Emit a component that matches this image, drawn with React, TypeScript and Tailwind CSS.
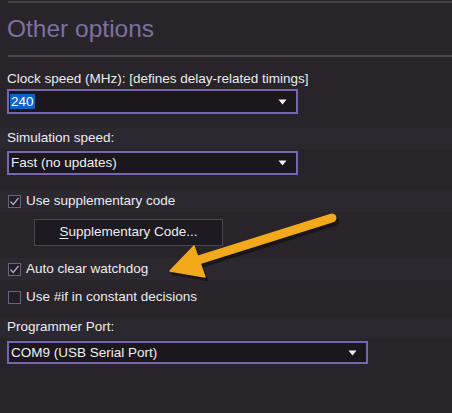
import React from 'react';

const font = { fontFamily: '"Liberation Sans", Arial, sans-serif' };

function Caret() {
  return (
    <svg width="9" height="6" viewBox="0 0 9 6" className="shrink-0">
      <path d="M0.5 0.5 L8.5 0.5 L4.5 5.5 Z" fill="#f2f2f2" />
    </svg>
  );
}

function Select({ value, width, height, highlight }: { value: string; width: string; height: string; highlight?: boolean }) {
  return (
    <div className={`${width} ${height} ml-[7px] border-2 border-[#7467ad] bg-[#1b171d] flex items-center pl-[1px] pr-[9px]`}>
      <span className={`flex-1 text-[13.5px] leading-[18px] text-[#f0f0f0] ${highlight ? '' : 'pl-[1px]'}`}>
        {highlight ? <span className="bg-[#0b63c5] px-[1px] text-white">{value}</span> : value}
      </span>
      <Caret />
    </div>
  );
}

function Check({ label, checked, band }: { label: string; checked?: boolean; band?: boolean }) {
  return (
    <div className={`h-[22px] flex items-center pl-[8px] gap-[5px] ${band ? 'bg-[#2c2830]' : ''}`}>
      <div className="w-[13px] h-[13px] border border-[#6d6380] bg-[#241f27] flex items-center justify-center">
        {checked && (
          <svg width="11" height="11" viewBox="0 0 11 11">
            <path d="M1.5 5.5 L4.2 8.5 L9.5 2" fill="none" stroke="#b7aecb" strokeWidth="1.2" />
          </svg>
        )}
      </div>
      <span className="text-[13.5px] text-[#ececec]">{label}</span>
    </div>
  );
}

export default function App() {
  return (
    <div className="w-[452px] h-[413px] bg-[#28242a] overflow-hidden relative" style={font}>
      {/* header */}
      <div className="ml-[8px] mt-[1px] h-[2px] bg-[#45414a]" />
      <div className="h-[52px] pl-[7px] flex items-center text-[24.5px] text-[#7d71a0]">Other options</div>
      <div className="ml-[8px] h-[2px] bg-[#4a4650]" />

      <div className="h-[13px]" />
      <div className="h-[19px] pl-[7px] flex items-center text-[13.5px] text-[#ececec]">
        Clock speed (MHz): [defines delay-related timings]
      </div>
      <Select value="240" width="w-[291px]" height="h-[25px]" highlight />

      <div className="h-[14px]" />
      <div className="h-[21px] pl-[7px] flex items-center text-[13.5px] text-[#ececec] bg-[#2c2830]">
        Simulation speed:
      </div>
      <div className="h-[2px]" />
      <Select value="Fast (no updates)" width="w-[291px]" height="h-[24px]" />

      <div className="h-[15px]" />
      <Check label="Use supplementary code" checked band />

      <div className="h-[7px]" />
      <div className="ml-[34px] w-[189px] h-[27px] border border-[#4b4751] bg-[#1e1a21] flex items-center justify-center text-[13.5px] text-[#ececec]">
        <span>
          <span className="underline underline-offset-2">S</span>upplementary Code...
        </span>
      </div>

      <div className="h-[12px]" />
      <Check label="Auto clear watchdog" checked band />
      <div className="h-[6px]" />
      <Check label="Use #if in constant decisions" />

      <div className="h-[9px]" />
      <div className="h-[21px] pl-[7px] flex items-center text-[13.5px] text-[#ececec] bg-[#2c2830]">
        Programmer Port:
      </div>
      <div className="h-[3px]" />
      <Select value="COM9 (USB Serial Port)" width="w-[361px]" height="h-[23px]" />

      {/* annotation arrow */}
      <svg className="absolute left-0 top-0 pointer-events-none" width="452" height="413" viewBox="0 0 452 413">
        <g transform="translate(2 3)" fill="#0d0a0e" stroke="#0d0a0e" opacity="0.55">
          <line x1="332" y1="218" x2="192" y2="262" strokeWidth="10" strokeLinecap="round" />
          <polygon points="170,271 194,246 205,277" strokeWidth="2" strokeLinejoin="round" />
        </g>
        <g fill="#f2aa1c" stroke="#f2aa1c">
          <line x1="332" y1="218" x2="192" y2="262" strokeWidth="9" strokeLinecap="round" />
          <polygon points="170,271 194,246 205,277" strokeWidth="1.5" strokeLinejoin="round" />
        </g>
      </svg>
    </div>
  );
}
